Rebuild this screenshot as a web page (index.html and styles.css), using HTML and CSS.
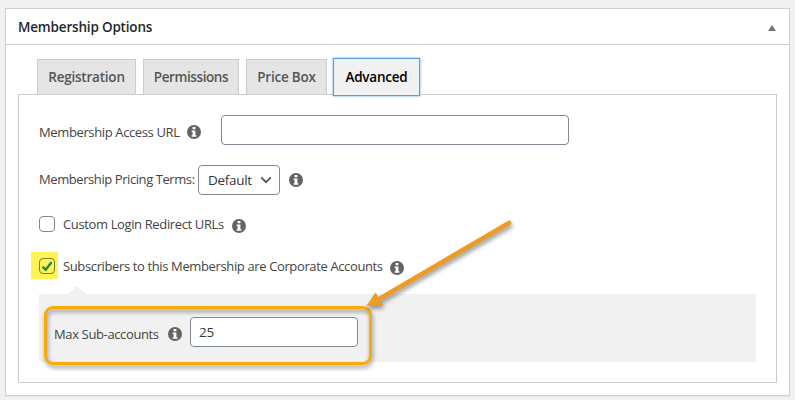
FILE: index.html
```html
<!DOCTYPE html>
<html lang="en">
<head>
  <meta charset="UTF-8" />
  <meta name="viewport" content="width=device-width, initial-scale=1.0"/>
  <title>Membership Options</title>
  <link rel="stylesheet" href="styles.css">
</head>
<body>

  <!-- Info icon, reused in every row -->
  <svg class="sprite" aria-hidden="true">
    <symbol id="info" viewBox="0 0 14 14">
      <circle cx="7" cy="7" r="7" fill="#646464"/>
      <path d="M5.6 2h2.8v2.2H5.6zM4.7 5.5h3.7v4.8h1v1.5H4.6v-1.5h1V7h-.9z" fill="#fff"/>
    </symbol>
  </svg>

  <div class="postbox">
    <div class="postbox-header">
      <h2>Membership Options</h2>
      <svg class="toggle" viewBox="0 0 8 6"><path d="M4 0l4 6H0z" fill="#72777c"/></svg>
    </div>

    <div class="nav-tabs">
      <a class="nav-tab tab-registration"><span>Registration</span></a>
      <a class="nav-tab tab-permissions"><span>Permissions</span></a>
      <a class="nav-tab tab-price"><span>Price Box</span></a>
      <a class="nav-tab tab-advanced active"><span>Advanced</span></a>
    </div>

    <div class="tab-panel">
      <div class="row">
        <label class="label-access" for="access-url">Membership Access URL</label>
        <svg class="info"><use href="#info"/></svg>
        <input type="text" id="access-url" class="access-url">
      </div>

      <div class="row">
        <label class="label-pricing">Membership Pricing Terms:</label>
        <div class="select">
          <span>Default</span>
          <svg viewBox="0 0 12 8"><path d="M1.2 1.4L6 6.2l4.8-4.8" fill="none" stroke="#555" stroke-width="1.8"/></svg>
        </div>
        <svg class="info"><use href="#info"/></svg>
      </div>

      <div class="row check-row">
        <span class="checkbox"></span>
        <label class="label-redirect">Custom Login Redirect URLs</label>
        <svg class="info"><use href="#info"/></svg>
      </div>

      <div class="row check-row">
        <span class="checkbox checked">
          <svg viewBox="0 0 12 12"><path d="M1.5 6.7L4.7 9.8 10.5 2.2" fill="none" stroke="#128a4c" stroke-width="2.3"/></svg>
        </span>
        <label class="label-corporate">Subscribers to this Membership are Corporate Accounts</label>
        <svg class="info"><use href="#info"/></svg>
      </div>

      <div class="sub-box">
        <label class="label-max" for="max-sub">Max Sub-accounts</label>
        <svg class="info"><use href="#info"/></svg>
        <input type="text" id="max-sub" class="max-sub" value="25">
        <div class="callout"></div>
        <svg class="arrow" viewBox="0 0 160 100">
          <path d="M148 9L20 84" stroke="#ec9b27" stroke-width="4.8" stroke-linecap="round"/>
          <path d="M5.5 92l9-13.5 8 13z" fill="#ec9b27"/>
        </svg>
      </div>
    </div>
  </div>

</body>
</html>
```

FILE: styles.css
```css
* {
  margin: 0;
  padding: 0;
  box-sizing: border-box;
}

body {
  height: 400px;
  padding: 8px 5px;
  overflow: hidden;
  background: #f1f1f1;
  color: #444;
  font-family: "Open Sans", "Noto Sans", sans-serif;
  font-size: 13px;
}

.sprite {
  display: none;
}

.postbox {
  width: 785px;
  height: 388px;
  background: #fff;
  border: 1px solid #ccd0d4;
  box-shadow: 0 1px 1px rgba(0, 0, 0, 0.04);
}

.postbox-header {
  display: flex;
  justify-content: space-between;
  align-items: center;
  height: 36px;
  padding: 0 13px 0 12px;
  border-bottom: 1px solid #ccd0d4;
}

.postbox-header h2 {
  color: #23282d;
  font-size: 13.5px;
  font-weight: 600;
  letter-spacing: -0.18px;
  white-space: nowrap;
}

.toggle {
  width: 8px;
  height: 6px;
  margin-top: 2px;
}

/* Tabs */
.nav-tabs {
  display: flex;
  gap: 7px;
  height: 49px;
  padding: 14px 0 0 31px;
}

.nav-tab {
  display: flex;
  justify-content: center;
  align-items: center;
  height: 35px;
  background: #e5e5e5;
  border: 1px solid #ccc;
  border-bottom: none;
  color: #555;
  font-size: 13.5px;
  font-weight: 600;
  letter-spacing: -0.22px;
  white-space: nowrap;
}

.tab-registration { width: 99px; }
.tab-permissions { width: 96px; letter-spacing: -0.4px; }
.tab-price { width: 81px; }
.tab-advanced { width: 85px; }

.nav-tab.active {
  position: relative;
  height: 36px;
  background: #f1f1f1;
  border: none;
  box-shadow: 0 0 0 1px #5b9dd9, 0 0 2px 1px rgba(30, 140, 190, 0.8);
  color: #000;
}

.tab-panel {
  height: 289px;
  margin: 0 12px;
  padding: 20px;
  border: 1px solid #ccc;
}

.row {
  display: flex;
  align-items: center;
  height: 30px;
  margin-bottom: 20px;
}

.check-row {
  position: relative;
  z-index: 0;
  height: 18px;
  margin-bottom: 24px;
}

label {
  flex: none;
  letter-spacing: -0.37px;
  white-space: nowrap;
}

.info {
  flex: none;
  width: 14px;
  height: 14px;
}

.check-row .info {
  margin-top: 3px;
}

input,
.select {
  height: 30px;
  padding: 0 8px;
  background: #fff;
  border: 1px solid #7e8993;
  border-radius: 4px;
  color: #32373c;
  font-family: inherit;
  font-size: 13.5px;
  letter-spacing: -0.3px;
}

.label-access { width: 148px; padding-top: 4px; }
.label-pricing { width: 159px; margin-top: -3px; letter-spacing: -0.42px; }
.label-redirect { width: 169px; }
.label-corporate { width: 327px; }
.label-max { width: 114px; padding-top: 4px; }

.label-access + .info {
  margin: 4px 20px 0 0;
}

.access-url {
  width: 348px;
}

.select {
  display: flex;
  justify-content: space-between;
  align-items: center;
  width: 82px;
  margin-right: 9px;
  padding: 0 7px 0 9px;
}

.select svg {
  width: 12px;
  height: 8px;
}

.checkbox {
  display: flex;
  flex: none;
  justify-content: center;
  align-items: center;
  width: 16px;
  height: 16px;
  margin-right: 8px;
  background: #fff;
  border: 1px solid #7e8993;
  border-radius: 4px;
}

.checkbox.checked {
  position: relative;
  background: none;
  border-color: #7e7a2e;
}

/* Square marker highlight behind the checkbox */
.checkbox.checked::before {
  content: "";
  position: absolute;
  z-index: -1;
  top: -7px;
  left: -9px;
  width: 27px;
  height: 27px;
  background: #fff455;
}

.checkbox svg {
  width: 12px;
  height: 12px;
}

/* Grey box with its pointer */
.sub-box {
  position: relative;
  display: flex;
  align-items: center;
  height: 68px;
  margin-top: -5px;
  padding: 8px 0 0 15px;
  background: #f1f1f1;
}

.sub-box::before {
  content: "";
  position: absolute;
  top: -8px;
  left: 29px;
  border: 9px solid transparent;
  border-top: none;
  border-bottom: 8px solid #f1f1f1;
}

.sub-box .info {
  margin: 4px 8px 0 0;
}

.max-sub {
  width: 168px;
}

.callout {
  position: absolute;
  top: 12px;
  left: 5px;
  width: 328px;
  height: 59px;
  border: 3px solid #f9ab0c;
  border-radius: 9px;
  filter: drop-shadow(1px 3px 2px rgba(0, 0, 0, 0.4));
}

.arrow {
  position: absolute;
  top: -80px;
  left: 322px;
  width: 160px;
  height: 100px;
  filter: drop-shadow(1px 3px 2px rgba(0, 0, 0, 0.4));
}
```
